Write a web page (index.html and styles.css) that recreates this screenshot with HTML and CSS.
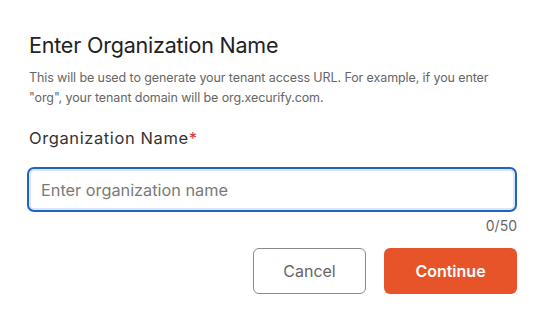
FILE: index.html
```html
<!DOCTYPE html>
<html lang="en">
<head>
    <meta charset="UTF-8">
    <meta name="viewport" content="width=device-width, initial-scale=1.0">
    <title>Enter Organization Name</title>
    <link rel="stylesheet" href="styles.css">
</head>
<body>
    <div class="dialog">
        <h2 class="dialog-title">Enter Organization Name</h2>
        <p class="dialog-desc">This will be used to generate your tenant access URL. For example, if you enter "org", your tenant domain will be org.xecurify.com.</p>

        <label class="field-label" for="org-name">Organization Name<span class="required">*</span></label>
        <input type="text" id="org-name" class="field-input" placeholder="Enter organization name" maxlength="50" autofocus>
        <div class="field-count">0/50</div>

        <div class="dialog-actions">
            <button class="btn btn-cancel">Cancel</button>
            <button class="btn btn-continue">Continue</button>
        </div>
    </div>
</body>
</html>
```

FILE: styles.css
```css
body {
    margin: 0;
    padding: 0;
    background-color: #fff;
    font-family: Inter, "Noto Sans", sans-serif;
    color: #222;
}

.dialog {
    width: 490px;
    padding: 31px 33px 0 27px;
}

.dialog-title {
    margin: 0 0 0 2px;
    font-size: 21.5px;
    line-height: 28px;
    font-weight: 400;
    color: #222;
    letter-spacing: -0.2px;
}

.dialog-desc {
    width: 474px;
    margin: 9px 0 0 2px;
    font-size: 12.5px;
    line-height: 20px;
    color: #666;
    letter-spacing: -0.1px;
}

.field-label {
    display: block;
    margin: 19px 0 0 2px;
    font-size: 16.5px;
    line-height: 22px;
    color: #333;
    letter-spacing: 0.6px;
}

.required {
    color: #d0324b;
}

.field-input {
    display: block;
    box-sizing: border-box;
    width: 490px;
    height: 45px;
    margin-top: 18px;
    padding: 0 12px;
    border: 2px solid #1f63c4;
    border-radius: 7px;
    box-shadow: inset 0 0 0 2px #dbe7f8;
    font-family: inherit;
    font-size: 16.3px;
    color: #333;
    outline: none;
}

.field-input::placeholder {
    color: #7a7a7a;
}

.field-count {
    margin-top: 5px;
    text-align: right;
    font-size: 14px;
    line-height: 18px;
    color: #666;
}

.dialog-actions {
    display: flex;
    justify-content: flex-end;
    gap: 18px;
    margin-top: 13px;
}

.btn {
    height: 46px;
    border-radius: 6px;
    font-family: inherit;
    font-size: 16px;
    cursor: pointer;
}

.btn-cancel {
    width: 113px;
    background-color: #fff;
    border: 1px solid #8a8a8a;
    color: #666;
}

.btn-continue {
    width: 133px;
    background-color: #e8542a;
    border: none;
    color: #fff;
    font-weight: 600;
}
```
